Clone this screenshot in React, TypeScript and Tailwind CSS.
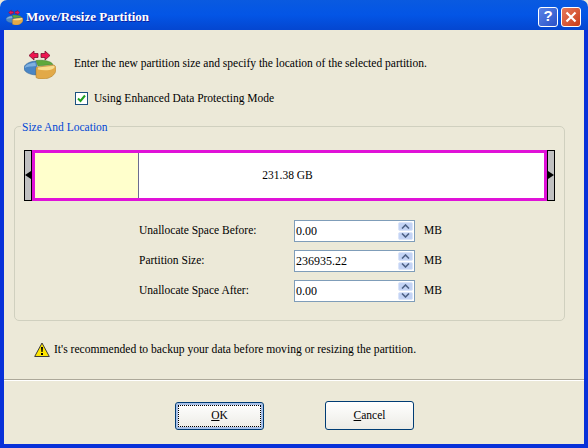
import type React from 'react'

const font = { fontFamily: '"Liberation Serif", serif' }

function PieIcon({ size }: { size: number }) {
  return (
    <svg width={size} height={size} viewBox="0 0 32 32">
      <path d="M5 8.500 10 4v2.500h4v4h-4V13z" fill="#ee1450" stroke="#7a1030" strokeWidth="0.8" />
      <path d="M26 8.500 21 4v2.500h-4v4h4V13z" fill="#ee1450" stroke="#7a1030" strokeWidth="0.8" />
      <path d="M0 21c0-3.500 5-6.500 12-7l1 5.500-1 1v7.500C5 27.500 0 25 0 21z" fill="#4a86c5" stroke="#2c5c8f" strokeWidth="0.5" />
      <path d="M0.800 21c0-3 5-5 10.500-5.500l.7 3.500C6 19.500 2 20 .8 21z" fill="#7fb0de" />
      <path d="M12 13.500c6-.8 15 .2 17 4l-15 1.500z" fill="#5ea83c" stroke="#3f7a2a" strokeWidth="0.5" />
      <path d="M13 20 30 18c1.500 1 2 2 2 4.500 0 5-6 9.500-13 9.500-3 0-5.500-.5-7-1.500V21z" fill="#e2a948" stroke="#a87a28" strokeWidth="0.5" />
      <path d="M14 20.500 30 18.700c1 .8 1 1.800-1 3-3 1.800-10 2-15 .8z" fill="#f7dc8e" />
    </svg>
  )
}

function SpinField({ label, value }: { label: string; value: string }) {
  return (
    <div className="flex items-center h-[22px]">
      <span className="w-[155px] text-[11.5px] text-black">{label}</span>
      <div className="w-[121px] h-[22px] flex items-center border border-[#7f9db9] bg-white pl-[1px] pr-[1px]">
        <span className="flex-1 text-[12px] text-black">{value}</span>
        <div className="flex flex-col w-[15px] h-[18px] gap-[1px]">
          <SpinButton up />
          <SpinButton />
        </div>
      </div>
      <span className="ml-[9px] text-[11.5px] text-black">MB</span>
    </div>
  )
}

function SpinButton({ up }: { up?: boolean }) {
  return (
    <div className="flex-1 flex items-center justify-center rounded-[2px] bg-[#c3d3f5] border border-[#dbe5f9]">
      <svg width="9" height="5" viewBox="0 0 9 5">
        <path d={up ? 'M1 4.500 4.500 1 8 4.500' : 'M1 .5 4.500 4 8 .5'} fill="none" stroke="#4d6185" strokeWidth="1.600" />
      </svg>
    </div>
  )
}

function DialogButton({ children, isDefault }: { children: React.ReactNode; isDefault?: boolean }) {
  return (
    <button
      type="button"
      className={
        isDefault
          ? 'w-[89px] h-[28px] rounded-[3px] border border-[#003c74] bg-gradient-to-b from-white to-[#ecebe5] p-[2px] text-[11.5px] text-black shadow-[inset_0_0_0_2px_#a9c1e8]'
          : 'w-[89px] h-[29px] rounded-[3px] border border-[#003c74] bg-gradient-to-b from-white to-[#ecebe5] text-[11.5px] text-black'
      }
    >
      {isDefault ? (
        <span className="flex h-full w-full items-center justify-center border border-dotted border-black">{children}</span>
      ) : (
        children
      )}
    </button>
  )
}

export default function App() {
  return (
    <div className="w-[588px] h-[448px] flex flex-col overflow-hidden bg-[#ece9d8]" style={font}>
      <div className="h-[30px] shrink-0 flex items-center pt-[3px] pl-[6px] pr-[7px] rounded-t-[7px] bg-gradient-to-b from-[#0a5ae0] via-[#0355e6] to-[#0446d0]">
        <PieIcon size={17} />
        <span className="ml-[3px] text-[13px] font-bold text-white [text-shadow:1px_1px_#0f1fa0]">Move/Resize Partition</span>
        <div className="ml-auto flex gap-[3px]">
          <div className="w-[20px] h-[20px] flex items-center justify-center rounded-[3px] border border-white bg-gradient-to-br from-[#5a83e6] to-[#2a50c8] text-[15px] font-bold text-white" style={{ fontFamily: '"Liberation Sans", sans-serif' }}>
            ?
          </div>
          <div className="w-[20px] h-[20px] flex items-center justify-center rounded-[3px] border border-white bg-gradient-to-br from-[#e6795a] to-[#c83a14]">
            <svg width="12" height="12" viewBox="0 0 12 12">
              <path d="M1.500 1.500 10.500 10.500M10.500 1.500 1.500 10.500" stroke="#fff" strokeWidth="2.200" />
            </svg>
          </div>
        </div>
      </div>

      <div className="flex-1 flex flex-col border-x-[4px] border-b-[4px] border-[#0831d9] bg-[#ece9d8]">
        <div className="flex items-center h-[46px] mt-[10px] pl-[20px]">
          <PieIcon size={32} />
          <span className="ml-[18px] mt-[2px] text-[11.5px] text-black whitespace-nowrap">
            Enter the new partition size and specify the location of the selected partition.
          </span>
        </div>

        <div className="flex items-center h-[13px] mt-[6px] ml-[71px]">
          <div className="w-[13px] h-[13px] flex items-center justify-center border border-[#1c5180] bg-white">
            <svg width="9" height="9" viewBox="0 0 9 9">
              <path d="M1 4.500 3.500 7 8 1.500" fill="none" stroke="#21a121" strokeWidth="2" />
            </svg>
          </div>
          <span className="ml-[6px] text-[11.5px] text-black">Using Enhanced Data Protecting Mode</span>
        </div>

        <div className="relative mt-[21px] ml-[10px] mr-[19px] h-[195px] rounded-[5px] border border-[#d0d0bf] pt-[23px] px-[9px]">
          <span className="absolute -top-[7px] left-[6px] bg-[#ece9d8] px-[1px] text-[11.5px] leading-[14px] text-[#0046d5]">
            Size And Location
          </span>

          <div className="flex h-[51px]">
            <div className="relative w-[8px] border border-black bg-[#c0c0c0]">
              <div className="absolute top-[20px] left-0 w-0 h-0 border-y-[4px] border-y-transparent border-r-[6px] border-r-black" />
            </div>
            <div className="flex-1 flex border-[3px] border-[#e012d8] bg-white">
              <div className="w-[104px] border-r border-[#6c6c90] bg-[#ffffcc]" />
              <div className="flex-1 flex items-center justify-center pr-[108px] text-[11.5px] text-black">231.38 GB</div>
            </div>
            <div className="relative w-[8px] border border-black bg-[#c0c0c0]">
              <div className="absolute top-[20px] right-0 w-0 h-0 border-y-[4px] border-y-transparent border-l-[6px] border-l-black" />
            </div>
          </div>

          <div className="flex flex-col gap-[8px] mt-[19px] ml-[115px]">
            <SpinField label="Unallocate Space Before:" value="0.00" />
            <SpinField label="Partition Size:" value="236935.22" />
            <SpinField label="Unallocate Space After:" value="0.00" />
          </div>
        </div>

        <div className="flex items-center h-[18px] mt-[20px] ml-[30px]">
          <svg width="16" height="16" viewBox="0 0 16 16">
            <path d="M8 1 15.300 14.500H.7z" fill="#ffe600" stroke="#3c3c3c" strokeWidth="1" strokeLinejoin="round" />
            <path d="M7 5h2l-.4 5H7.400zM7 11h2v2H7z" fill="#000" />
          </svg>
          <span className="ml-[4px] text-[11.6px] text-black">
            It's recommended to backup your data before moving or resizing the partition.
          </span>
        </div>

        <div className="mt-[20px] h-[2px] border-t border-[#aca899] bg-white" />

        <div className="flex items-center mt-[20px] ml-[171px] gap-[61px]">
          <DialogButton isDefault>
            <span className="underline">O</span>K
          </DialogButton>
          <DialogButton>
            <span className="underline">C</span>ancel
          </DialogButton>
        </div>
      </div>
    </div>
  )
}
